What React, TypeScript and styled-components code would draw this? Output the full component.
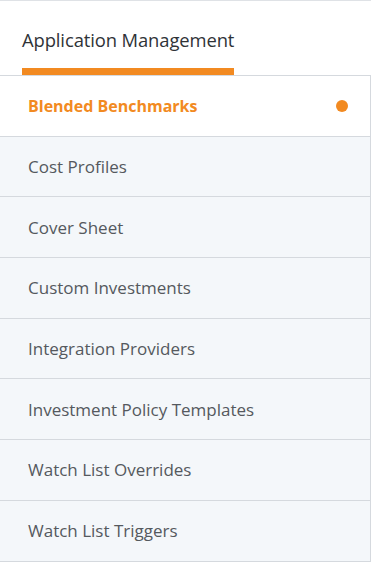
import React from 'react';
import styled, { createGlobalStyle } from 'styled-components';

const ITEMS = [
  'Blended Benchmarks',
  'Cost Profiles',
  'Cover Sheet',
  'Custom Investments',
  'Integration Providers',
  'Investment Policy Templates',
  'Watch List Overrides',
  'Watch List Triggers',
];

const GlobalStyle = createGlobalStyle`
  body {
    margin: 0;
    background: #ffffff;
    font-family: 'Open Sans', sans-serif;
  }
`;

const Panel = styled.div`
  width: 371px;
  border-top: 1px solid #dfe2e6;
  background: #ffffff;
`;

const TabBar = styled.div`
  display: flex;
  padding-left: 22px;
  height: 74px;
  align-items: flex-end;
`;

const Tab = styled.div`
  display: flex;
  flex-direction: column;
  align-items: center;
  font-size: 18.4px;
  color: #2f3337;
  letter-spacing: -0.1px;

  span {
    margin-bottom: 16px;
  }

  &::after {
    content: '';
    display: block;
    width: 100%;
    height: 7px;
    background: #f28a21;
  }
`;

const List = styled.ul`
  list-style: none;
  margin: 0;
  padding: 0;
  width: 370px;
  border-top: 1px solid #d5d9de;
  border-right: 1px solid #d5d9de;
`;

const Row = styled.li<{ $active?: boolean }>`
  display: flex;
  align-items: center;
  justify-content: space-between;
  height: 59.7px;
  padding: 0 22px 0 28px;
  border-bottom: 1px solid #d5d9de;
  background: ${(p) => (p.$active ? '#ffffff' : '#f4f7fa')};
  color: ${(p) => (p.$active ? '#f28a21' : '#55595e')};
  font-size: ${(p) => (p.$active ? '16px' : '17px')};
  font-weight: ${(p) => (p.$active ? 700 : 400)};
  cursor: pointer;
`;

const Dot = styled.span`
  width: 12px;
  height: 12px;
  border-radius: 50%;
  background: #f28a21;
`;

const App: React.FC = () => {
  return (
    <>
      <GlobalStyle />
      <Panel>
        <TabBar>
          <Tab>
            <span>Application Management</span>
          </Tab>
        </TabBar>
        <List>
          {ITEMS.map((item, idx) => (
            <Row key={item} $active={idx === 0}>
              {item}
              {idx === 0 && <Dot />}
            </Row>
          ))}
        </List>
      </Panel>
    </>
  );
};

export default App;
